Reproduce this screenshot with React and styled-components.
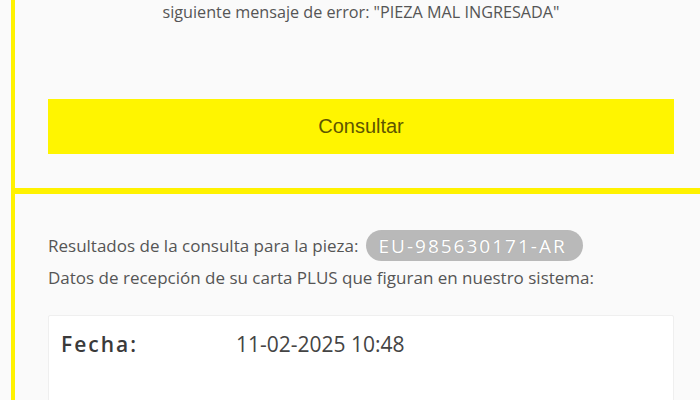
import styled, { createGlobalStyle } from 'styled-components';

const GlobalStyle = createGlobalStyle`
  html, body {
    margin: 0;
    padding: 0;
    background: #fafafa;
    overflow: hidden;
  }
  * { box-sizing: border-box; }
`;

const Page = styled.div`
  width: 700px;
  height: 400px;
  overflow: hidden;
  padding-left: 11px;
  font-family: "Open Sans", "Noto Sans", sans-serif;
  color: #555;
`;

const Section = styled.section`
  border-left: 4px solid #fff200;
  border-bottom: ${(p) => (p.$last ? 'none' : '6px solid #fff200')};
  padding: ${(p) => p.$pad};
`;

const Notice = styled.p`
  margin: 0;
  text-align: center;
  font-size: 16.2px;
  line-height: 20px;
  color: #555;
`;

const SubmitButton = styled.button`
  display: block;
  width: 626px;
  height: 55px;
  margin-top: 77px;
  border: none;
  background: #fff500;
  color: #5e5600;
  font-family: "Liberation Sans", Arial, sans-serif;
  font-size: 20px;
  cursor: pointer;
`;

const Line = styled.p`
  margin: 0;
  display: flex;
  align-items: center;
  gap: 7px;
  font-size: 17px;
  line-height: 20px;
  color: #555;
  margin-bottom: ${(p) => p.$mb || '0'};
`;

const Pill = styled.span`
  display: inline-flex;
  align-items: center;
  height: 31px;
  padding: 0 16px 0 13px;
  border-radius: 16px;
  background: #b9b9b9;
  color: #fff;
  font-size: 19px;
  font-weight: 500;
  letter-spacing: 2px;
  text-shadow: 0 0 1px rgba(0, 0, 0, 0.15);
`;

const Card = styled.div`
  width: 626px;
  height: 120px;
  background: #fff;
  border: 1px solid #efefef;
  border-radius: 2px;
  padding: 14px 12px;
`;

const Row = styled.div`
  display: grid;
  grid-template-columns: 175px 1fr;
  align-items: baseline;
`;

const Label = styled.span`
  font-size: 21px;
  font-weight: 600;
  letter-spacing: 2px;
  color: #3a3a3a;
`;

const Value = styled.span`
  font-size: 21px;
  color: #444;
`;

export default function App() {
  return (
    <Page>
      <GlobalStyle />
      <Section $pad="2px 26px 34px 33px">
        <Notice>siguiente mensaje de error: "PIEZA MAL INGRESADA"</Notice>
        <SubmitButton>Consultar</SubmitButton>
      </Section>
      <Section $last $pad="36px 26px 0 33px">
        <Line $mb="7px">
          Resultados de la consulta para la pieza:
          <Pill>EU-985630171-AR</Pill>
        </Line>
        <Line $mb="27px">
          Datos de recepción de su carta PLUS que figuran en nuestro sistema:
        </Line>
        <Card>
          <Row>
            <Label>Fecha:</Label>
            <Value>11-02-2025 10:48</Value>
          </Row>
        </Card>
      </Section>
    </Page>
  );
}
